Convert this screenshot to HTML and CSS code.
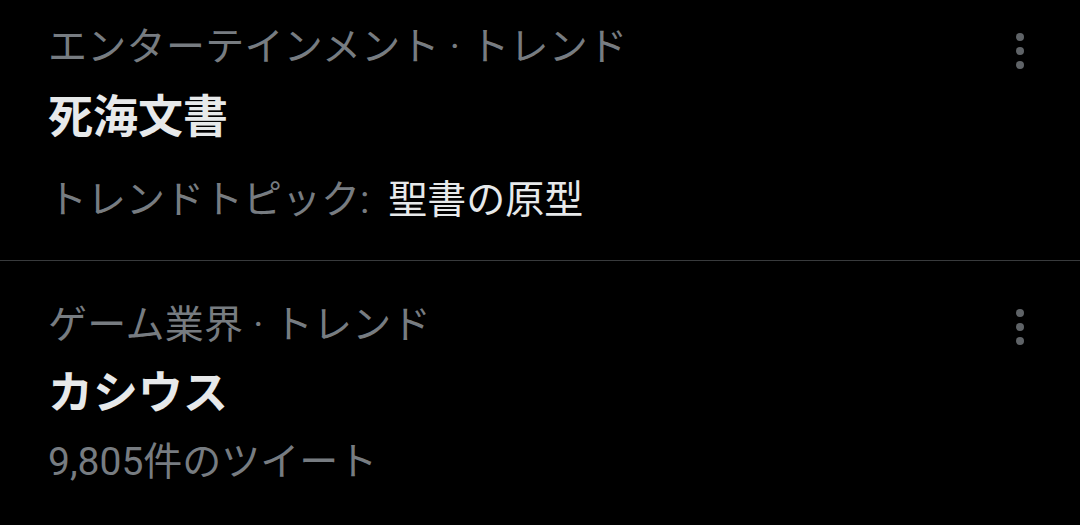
FILE: index.html
```html
<!DOCTYPE html>
<html lang="ja">
<head>
    <meta charset="UTF-8">
    <meta name="viewport" content="width=device-width, initial-scale=1.0">
    <title>トレンド</title>
    <link rel="stylesheet" href="styles.css">
</head>
<body>
    <div class="trend-list">
        <div class="trend trend-first">
            <div class="trend-body">
                <div class="trend-category">エンターテインメント · トレンド</div>
                <div class="trend-title">死海文書</div>
                <div class="trend-meta trend-meta-topic">トレンドトピック: <span class="topic">聖書の原型</span></div>
            </div>
            <button class="more" aria-label="その他">
                <span class="dot"></span><span class="dot"></span><span class="dot"></span>
            </button>
        </div>

        <div class="trend trend-second">
            <div class="trend-body">
                <div class="trend-category">ゲーム業界 · トレンド</div>
                <div class="trend-title">カシウス</div>
                <div class="trend-meta">9,805件のツイート</div>
            </div>
            <button class="more" aria-label="その他">
                <span class="dot"></span><span class="dot"></span><span class="dot"></span>
            </button>
        </div>
    </div>
</body>
</html>
```

FILE: styles.css
```css
body {
    margin: 0;
    padding: 0;
    background-color: #000;
    font-family: Roboto, "Noto Sans CJK JP", sans-serif;
    color: #e7e9ea;
}

.trend-list {
    width: 1080px;
}

.trend {
    display: flex;
    align-items: flex-start;
    padding-left: 48px;
}

.trend-first {
    padding-top: 22px;
    padding-bottom: 35px;
    border-bottom: 1px solid #383a3c;
}

.trend-second {
    padding-top: 39px;
}

.trend-body {
    flex: 1;
}

.trend-category {
    font-size: 39px;
    line-height: 50px;
    letter-spacing: 0.3px;
    color: #777c81;
}

.trend-title {
    font-size: 45px;
    font-weight: bold;
    line-height: 60px;
    margin-top: 16px;
}

.trend-second .trend-title {
    margin-top: 14px;
}

.trend-meta {
    font-size: 39px;
    line-height: 50px;
    color: #777c81;
    margin-top: 13px;
}

.trend-meta-topic {
    margin-top: 27px;
}

.topic {
    color: #e7e9ea;
    margin-left: 9px;
}

.more {
    width: 40px;
    height: 50px;
    margin-right: 40px;
    padding: 0;
    border: none;
    background: none;
    display: flex;
    flex-direction: column;
    align-items: center;
    justify-content: center;
    gap: 6px;
}

.trend-first .more {
    margin-top: 4px;
}

.trend-second .more {
    margin-top: 2px;
}

.dot {
    width: 8px;
    height: 8px;
    border-radius: 50%;
    background-color: #5f6367;
}
```
